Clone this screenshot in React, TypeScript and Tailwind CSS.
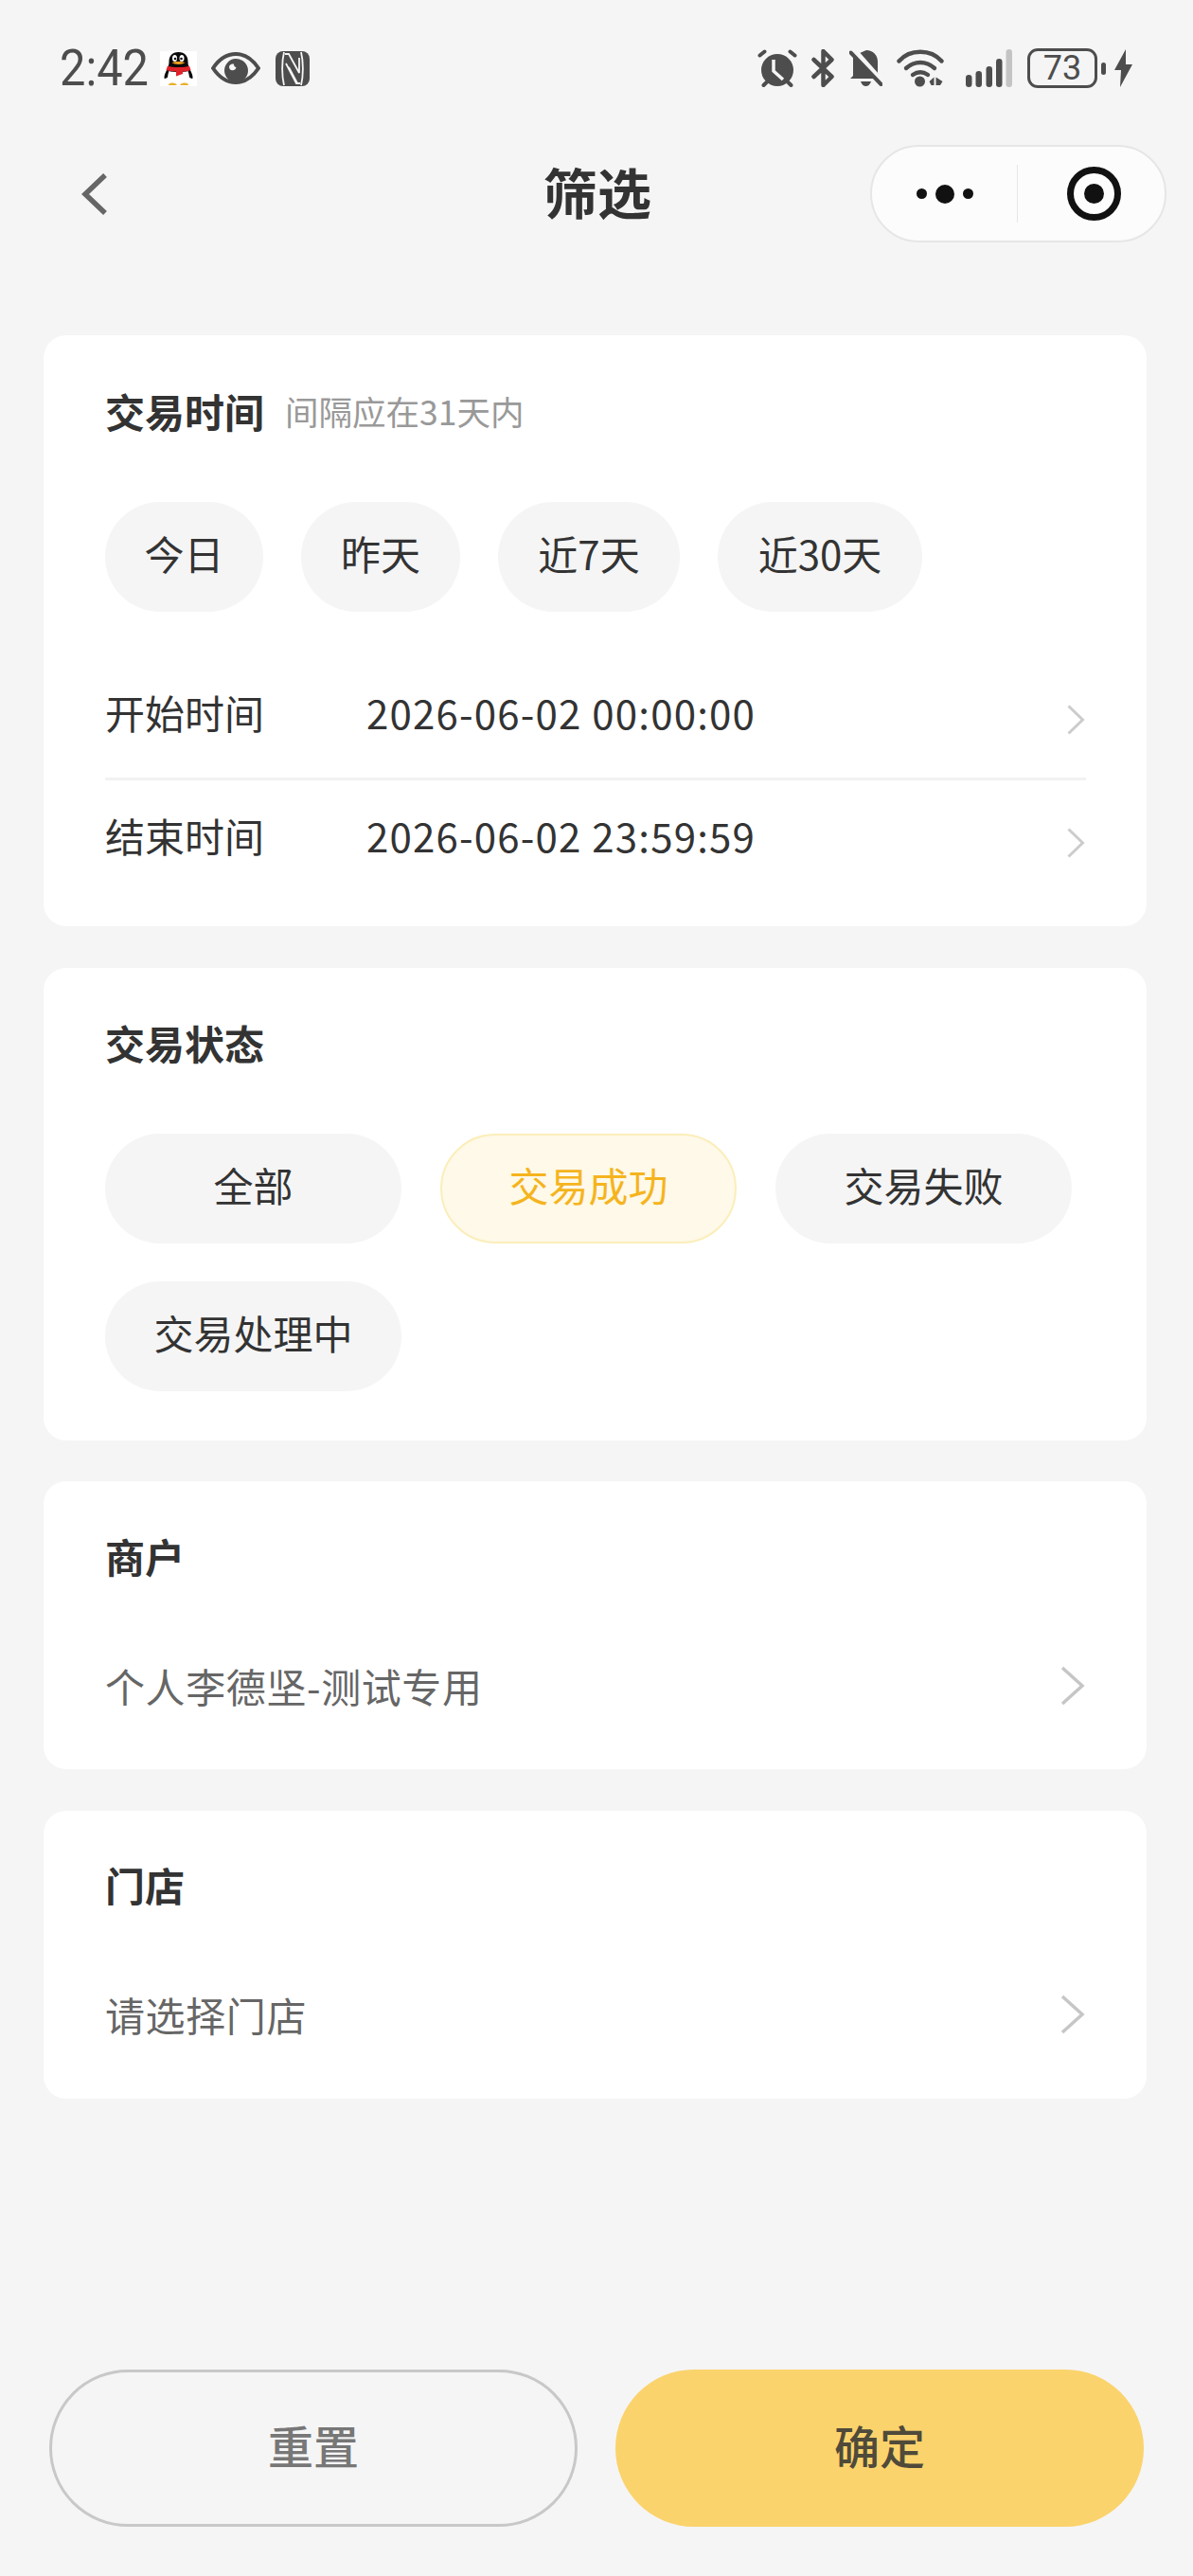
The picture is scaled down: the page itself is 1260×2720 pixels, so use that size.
import type { ReactNode } from 'react';

const cjk = { fontFamily: '"Noto Sans CJK SC", "Noto Sans", sans-serif' };

function Penguin() {
  return (
    <svg width="39" height="37" viewBox="0 0 39 37">
      <rect width="39" height="37" fill="#ffffff" />
      <path d="M19.5 1c-7 0-10 4.500-10 10 0 3-.5 5-2 8-1.500 3-3.500 7-3 9.500.5 1.500 3-.5 4-1.500 1.500 4.500 6 7 11 7s9.500-2.500 11-7c1 1 3.500 3 4 1.500.5-2.500-1.500-6.500-3-9.500-1.500-3-2-5-2-8 0-5.500-3-10-10-10z" fill="#0a0a0a" />
      <path d="M9.500 21c4 1.500 16 1.500 20 0 1.500 4 2 8 .5 10.500-2 2.500-6 3-10.500 3s-8.500-.5-10.500-3c-1.500-2.500-1-6.500.5-10.500z" fill="#ffffff" />
      <path d="M8 15.500c5 2 18 2 23 0l1.500 4.500c-3 1-5.500 1.500-8.500 1.500v2.500l-7 2.500v-5c-3.500 0-7-.5-10.500-1.500z" fill="#e0222b" />
      <ellipse cx="15.500" cy="7.500" rx="2.500" ry="3.500" fill="#ffffff" />
      <ellipse cx="23" cy="7.500" rx="2.500" ry="3.500" fill="#ffffff" />
      <circle cx="16" cy="8" r="1.300" fill="#0a0a0a" />
      <circle cx="22.500" cy="8" r="1.300" fill="#0a0a0a" />
      <path d="M12.500 12c4-1.500 10-1.500 14 0-3 2.500-11 2.500-14 0z" fill="#f0a01e" />
      <path d="M9 35c3-2 7-2 9 1H9zM21 36c2-3 6-3 9-1v1z" fill="#eab02c" />
    </svg>
  );
}

function Eye() {
  return (
    <svg width="52" height="34" viewBox="0 0 52 34">
      <path d="M2 17C9 6.500 17 2 26 2s17 4.500 24 15c-7 10.500-15 15-24 15S9 27.500 2 17z" fill="none" stroke="#4d4d4d" strokeWidth="4" />
      <path d="M26 7a12.500 12.500 0 1 0 13 12.500C39 12.500 33 7 26 7zm-2 5.500c-.2 1.800 1 3.200 2.500 3.500-.5 2.200-2.300 3.500-4.300 3.300-1.800-.2-3.200-1.800-3.200-3.600 0-2 2.300-3.800 5-3.200z" fill="#4d4d4d" fillRule="evenodd" />
    </svg>
  );
}

function Nfc() {
  return (
    <svg width="36" height="37" viewBox="0 0 36 37">
      <rect width="36" height="37" rx="8" fill="#4d4d4d" />
      <g fill="none" stroke="#f5f5f5" strokeWidth="1.800">
        <path d="M9 1c-2.500 10-2.500 25 0 35" />
        <path d="M27 1c2.500 10 2.500 25 0 35" />
        <path d="M10 3h4l11 20V7" />
        <path d="M11 13l11 21h4" />
        <path d="M14 17l9 17" />
      </g>
    </svg>
  );
}

function Alarm() {
  return (
    <svg width="42" height="40" viewBox="0 0 42 40">
      <circle cx="21" cy="22" r="17" fill="#4d4d4d" />
      <path d="M2.500 6.500l5-4M39.500 6.500l-5-4M6.500 38l3-3M35.500 38l-3-3" stroke="#4d4d4d" strokeWidth="4" strokeLinecap="round" />
      <path d="M17 11v12l10 9" stroke="#f5f5f5" strokeWidth="3.500" fill="none" />
    </svg>
  );
}

function Bluetooth() {
  return (
    <svg width="24" height="40" viewBox="0 0 24 40">
      <path d="M2.500 11l19 18-9 9V2l9 9-19 18" fill="none" stroke="#4d4d4d" strokeWidth="4.500" strokeLinejoin="round" strokeLinecap="round" />
    </svg>
  );
}

function BellOff() {
  return (
    <svg width="35" height="40" viewBox="0 0 35 40">
      <path d="M18 1c7 0 12 5 12 12v12l3 6H1l3-3V7z" fill="#4d4d4d" />
      <path d="M12 34h11c-1 3-3 5-5.500 5S13 37 12 34z" fill="#4d4d4d" />
      <path d="M4 0l30 34" stroke="#f5f5f5" strokeWidth="6" />
      <path d="M1.500 3.500L33.500 37" stroke="#4d4d4d" strokeWidth="4" strokeLinecap="round" />
    </svg>
  );
}

function Wifi() {
  return (
    <svg width="50" height="40" viewBox="0 0 50 40">
      <g fill="none" stroke="#4d4d4d" strokeWidth="4.400" strokeLinecap="round">
        <path d="M2.500 12.500C14-.5 36-.5 47.500 12.500" />
        <path d="M10 20c9-8 21-8 30 0" />
        <path d="M17 27c5-3.500 11-3.500 16 0" />
      </g>
      <circle cx="24.500" cy="34" r="5.500" fill="#4d4d4d" />
      <path d="M34.500 34l5-4.500V38h-3zM41.500 29.500l7 4.500-2.500 4h-4.500z" fill="#4d4d4d" />
    </svg>
  );
}

function Signal() {
  return (
    <svg width="49" height="40" viewBox="0 0 49 40">
      <rect x="0" y="27" width="6.500" height="13" rx="3.200" fill="#4d4d4d" />
      <rect x="10.500" y="23" width="6.500" height="17" rx="3.200" fill="#4d4d4d" />
      <rect x="21.500" y="18" width="6.500" height="22" rx="3.200" fill="#4d4d4d" />
      <rect x="32" y="10" width="6.500" height="30" rx="3.200" fill="#4d4d4d" />
      <rect x="42.500" y="0" width="6.500" height="40" rx="3.200" fill="#c4c4c4" />
    </svg>
  );
}

function Bolt() {
  return (
    <svg width="19" height="40" viewBox="0 0 19 40">
      <path d="M12 0L0 22h7L6 40l13-24h-7z" fill="#4d4d4d" />
    </svg>
  );
}

function Chevron({ size = 'small' }: { size?: 'small' | 'large' }) {
  return size === 'small' ? (
    <svg width="19" height="32" viewBox="0 0 19 32">
      <path d="M1.500 1.500L16.500 16l-15 14.500" fill="none" stroke="#cccccc" strokeWidth="3" />
    </svg>
  ) : (
    <svg width="28" height="42" viewBox="0 0 28 42">
      <path d="M3 2l21 19L3 40" fill="none" stroke="#c6c6c6" strokeWidth="3.500" />
    </svg>
  );
}

function Card({ className, children }: { className: string; children: ReactNode }) {
  return <section className={`bg-white rounded-[24px] pl-[65px] pr-[64px] ${className}`}>{children}</section>;
}

function Chip({ label, className = '', active = false }: { label: string; className?: string; active?: boolean }) {
  return (
    <div
      className={`h-[116px] rounded-[58px] pb-[8px] flex items-center justify-center text-[42px] leading-none ${
        active
          ? 'bg-[#fef9e8] border-2 border-[#fbeeba] text-[#f5b41e]'
          : 'bg-[#f5f5f5] text-[#333333]'
      } ${className}`}
    >
      {label}
    </div>
  );
}

function TimeRow({ label, value }: { label: string; value: string }) {
  return (
    <div className="flex items-center h-[74px] text-[42px] leading-none text-[#333333]">
      <span className="w-[276px] pb-[6px]">{label}</span>
      <span className="flex-1 pb-[6px] tracking-[1.2px]">{value}</span>
      <span className="flex mr-[1px] mt-[10px]">
        <Chevron />
      </span>
    </div>
  );
}

function PickerCard({ title, value, className }: { title: string; value: string; className: string }) {
  return (
    <Card className={className}>
      <h2 className="text-[42px] leading-none font-bold text-[#333333]">{title}</h2>
      <div className="flex items-center justify-between mt-[95px]">
        <span className="text-[42px] leading-none tracking-[0.6px] text-[#666666]">{value}</span>
        <Chevron size="large" />
      </div>
    </Card>
  );
}

export default function App() {
  return (
    <div className="w-[1260px] h-[2720px] bg-[#f5f5f5] flex flex-col overflow-hidden" style={cjk}>
      {/* status bar */}
      <div className="flex items-center justify-between h-[42px] mt-[51px] pl-[63px] pr-[64px]">
        <div className="flex items-center">
          <span
            className="w-[91px] text-[53px] leading-none text-[#4d4d4d] origin-left scale-x-[0.92] whitespace-nowrap"
            style={{ fontFamily: 'Roboto, sans-serif' }}
          >
            2:42
          </span>
          <span className="ml-[15px] flex"><Penguin /></span>
          <span className="ml-[15px] flex"><Eye /></span>
          <span className="ml-[16px] flex"><Nfc /></span>
        </div>
        <div className="flex items-center">
          <Alarm />
          <span className="ml-[15px] flex"><Bluetooth /></span>
          <span className="ml-[16px] flex"><BellOff /></span>
          <span className="ml-[15px] flex"><Wifi /></span>
          <span className="ml-[23px] flex"><Signal /></span>
          <div className="ml-[16px] w-[74px] h-[42px] border-[3px] border-[#4d4d4d] rounded-[11px] flex items-center justify-center">
            <span className="text-[36px] leading-none text-[#4d4d4d]" style={{ fontFamily: 'Roboto, sans-serif' }}>73</span>
          </div>
          <span className="ml-[4px] w-[5px] h-[13px] rounded-full bg-[#4d4d4d]" />
          <span className="ml-[9px] flex"><Bolt /></span>
        </div>
      </div>

      {/* nav */}
      <div className="grid grid-cols-[488px_auto_1fr] items-center mt-[60px] h-[103px] pl-[86px] pr-[28px]">
        <svg width="27" height="44" viewBox="0 0 27 44">
          <path d="M25 2L4 22l21 20" fill="none" stroke="#666666" strokeWidth="5.500" />
        </svg>
        <h1 className="text-[57px] leading-none font-bold text-[#333333] pb-[6px]">筛选</h1>
        <div className="justify-self-end w-[313px] h-[103px] rounded-[52px] bg-white/70 border-2 border-[#e6e6e6] flex items-center">
          <div className="flex-1 flex items-center justify-center gap-[9px]">
            <span className="w-[11px] h-[11px] rounded-full bg-[#111111]" />
            <span className="w-[20px] h-[20px] rounded-full bg-[#111111]" />
            <span className="w-[11px] h-[11px] rounded-full bg-[#111111]" />
          </div>
          <span className="w-px h-[61px] bg-[#e6e6e6]" />
          <div className="w-[155px] pl-[6px] flex items-center justify-center">
            <div className="w-[57px] h-[57px] rounded-full border-[7px] border-[#111111] flex items-center justify-center">
              <span className="w-[21px] h-[21px] rounded-full bg-[#111111]" />
            </div>
          </div>
        </div>
      </div>

      <main className="flex flex-col ml-[46px] mr-[49px] mt-[98px]">
        <Card className="h-[624px] pt-[55px]">
          <div className="flex items-center h-[50px]">
            <h2 className="text-[42px] leading-none font-bold text-[#333333]">交易时间</h2>
            <span className="ml-[22px] text-[35.5px] leading-none text-[#999999]">间隔应在31天内</span>
          </div>
          <div className="flex gap-[40px] mt-[71px]">
            <Chip label="今日" className="w-[167px]" />
            <Chip label="昨天" className="w-[168px]" />
            <Chip label="近7天" className="w-[192px]" />
            <Chip label="近30天" className="w-[216px]" />
          </div>
          <div className="mt-[72px]">
            <TimeRow label="开始时间" value="2026-06-02 00:00:00" />
          </div>
          <div className="h-[3px] bg-[#f2f2f2] mt-[29px] mb-[24px]" />
          <TimeRow label="结束时间" value="2026-06-02 23:59:59" />
        </Card>

        <Card className="h-[499px] mt-[44px] pt-[58px]">
          <h2 className="text-[42px] leading-none font-bold text-[#333333]">交易状态</h2>
          <div className="grid grid-cols-[313px_313px_313px] gap-x-[41px] gap-y-[40px] mt-[75px]">
            <Chip label="全部" />
            <Chip label="交易成功" active />
            <Chip label="交易失败" />
            <Chip label="交易处理中" />
          </div>
        </Card>

        <PickerCard title="商户" value="个人李德坚-测试专用" className="h-[304px] mt-[43px] pt-[58px]" />
        <PickerCard title="门店" value="请选择门店" className="h-[304px] mt-[44px] pt-[57px]" />
      </main>

      {/* bottom actions */}
      <div className="mt-auto mb-[52px] flex gap-[40px] pl-[52px]">
        <button className="w-[558px] h-[166px] rounded-[83px] pb-[8px] border-[3px] border-[#c8c8c8] text-[48px] font-medium text-[#777777]">
          重置
        </button>
        <button className="w-[558px] h-[166px] rounded-[83px] pb-[8px] bg-[#fbd36c] text-[48px] font-medium text-[#4f4a3a]">
          确定
        </button>
      </div>
    </div>
  );
}
